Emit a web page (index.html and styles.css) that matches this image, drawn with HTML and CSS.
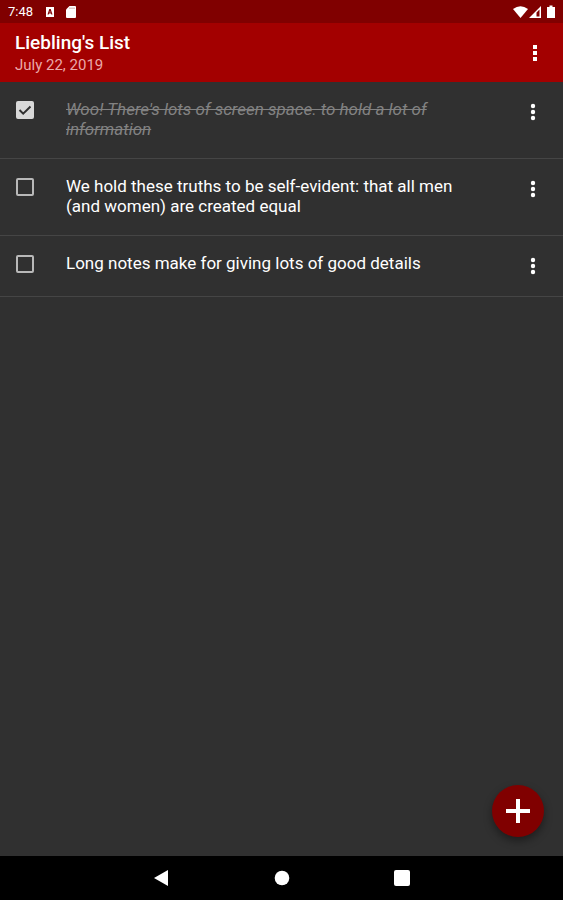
FILE: index.html
```html
<!DOCTYPE html>
<html lang="en">
<head>
<meta charset="utf-8">
<meta name="viewport" content="width=device-width, initial-scale=1">
<title>Liebling's List</title>
<link rel="stylesheet" href="styles.css">
</head>
<body>
<div class="status">
  <span class="clock">7:48</span>
  <svg class="note-icon" width="10" height="12" viewBox="0 0 10 12"><path fill="#fff" fill-rule="evenodd" d="M1 1h8v10H1zM4.300 3 2.500 8.500h1.200l.3-1h2l.3 1h1.200L5.700 3zM5 4.800l.5 1.700h-1z"/></svg>
  <svg class="card-icon" width="12" height="14" viewBox="0 0 12 14"><path fill="#fff" d="M4.500 1H10q1 0 1 1v10q0 1-1 1H2q-1 0-1-1V4.500z"/><path stroke="#a66" stroke-width=".7" d="M5 2.500v1.500M7 2.500v1.500M9 2.500v1.500"/></svg>
  <svg class="system-icons" width="44" height="16" viewBox="0 0 44 16"><path fill="#fff" d="M0 5Q7.500-.5 15 5L7.500 14z"/><path fill="#fff" fill-rule="evenodd" d="M16 14 28 2v12zM23.500 8.500v4h3v-7z"/><path fill="#fff" d="M34 3h2.500V1.500h3V3H42v11h-8z"/></svg>
</div>
<header class="bar">
  <div class="heading">
    <h1>Liebling's List</h1>
    <p>July 22, 2019</p>
  </div>
  <button class="more" aria-label="List options"><svg width="4" height="16" viewBox="0 0 4 16"><path fill="#fff" d="M0 0h4v4H0zM0 6h4v4H0zM0 12h4v4H0z"/></svg></button>
</header>
<main>
  <ul class="notes">
    <li class="note">
      <input type="checkbox" id="n1" checked>
      <label for="n1">Woo! There's lots of screen space. to hold a lot of information</label>
      <button class="more" aria-label="Note options"><svg width="6" height="18" viewBox="0 0 6 18"><g fill="#fff"><circle cx="3" cy="3" r="2.200"/><circle cx="3" cy="9" r="2.200"/><circle cx="3" cy="15" r="2.200"/></g></svg></button>
    </li>
    <li class="note">
      <input type="checkbox" id="n2">
      <label for="n2">We hold these truths to be self-evident: that all men (and women) are created equal</label>
      <button class="more" aria-label="Note options"><svg width="6" height="18" viewBox="0 0 6 18"><g fill="#fff"><circle cx="3" cy="3" r="2.200"/><circle cx="3" cy="9" r="2.200"/><circle cx="3" cy="15" r="2.200"/></g></svg></button>
    </li>
    <li class="note">
      <input type="checkbox" id="n3">
      <label for="n3">Long notes make for giving lots of good details</label>
      <button class="more" aria-label="Note options"><svg width="6" height="18" viewBox="0 0 6 18"><g fill="#fff"><circle cx="3" cy="3" r="2.200"/><circle cx="3" cy="9" r="2.200"/><circle cx="3" cy="15" r="2.200"/></g></svg></button>
    </li>
  </ul>
  <button class="add" aria-label="Add note"><svg width="24" height="24" viewBox="0 0 24 24"><path fill="none" stroke="#fff" stroke-width="4" d="M12 0v24M0 12h24"/></svg></button>
</main>
<nav class="system-nav">
  <button aria-label="Back"><svg width="16" height="18" viewBox="0 0 16 18"><path fill="#fff" d="M14 1v16L0 9z"/></svg></button>
  <button aria-label="Home"><svg width="16" height="16" viewBox="0 0 16 16"><circle fill="#fff" cx="8" cy="8" r="7.300"/></svg></button>
  <button aria-label="Recent apps"><svg width="16" height="16" viewBox="0 0 16 16"><rect fill="#fff" width="16" height="16" rx="2"/></svg></button>
</nav>
</body>
</html>
```
FILE: styles.css
```css
* {
  box-sizing: border-box;
}

body {
  margin: 0;
  min-height: 100vh;
  display: flex;
  flex-direction: column;
  background: #303030;
  color: #fff;
  font-family: Roboto, "Liberation Sans", sans-serif;
}

button {
  padding: 0;
  border: 0;
  background: none;
  color: inherit;
  display: flex;
  align-items: center;
  justify-content: center;
}

svg {
  display: block;
}

.status {
  height: 23px;
  padding: 0 6px 0 8px;
  display: flex;
  align-items: center;
  background: #800000;
}

.clock {
  font-size: 13px;
  line-height: 24px;
}

.note-icon {
  margin-left: 12px;
}

.card-icon {
  margin-left: 10px;
}

.system-icons {
  margin-left: auto;
}

.bar {
  height: 59px;
  padding: 0 8px 0 15px;
  display: flex;
  align-items: center;
  justify-content: space-between;
  background: #a30000;
}

.heading h1 {
  margin: 0;
  font-size: 19px;
  font-weight: 500;
  line-height: 24px;
}

.heading p {
  margin: 0;
  font-size: 15px;
  line-height: 20px;
  color: #eba9a9;
}

.more {
  flex: none;
  width: 40px;
  height: 60px;
}

main {
  position: relative;
  flex: 1;
}

.notes {
  margin: 0;
  padding: 0;
  list-style: none;
}

.note {
  padding: 0 10px 0 16px;
  display: flex;
  align-items: flex-start;
  border-bottom: 1px solid #454545;
}

.note input {
  appearance: none;
  flex: none;
  width: 18px;
  height: 18px;
  margin: 19px 32px 0 0;
  border: 2px solid #b8b8b8;
  border-radius: 2px;
}

.note input:checked {
  border-color: #d8d8d8;
  background: #d8d8d8 url("data:image/svg+xml,%3Csvg xmlns='http://www.w3.org/2000/svg' viewBox='0 0 14 14'%3E%3Cpath d='M1.500 7 5.200 10.700 12.500 3.500' fill='none' stroke='%23303030' stroke-width='2'/%3E%3C/svg%3E") center / 14px 14px no-repeat;
}

.note label {
  flex: 1;
  padding: 17px 40px 19px 0;
  font-size: 17px;
  line-height: 20px;
}

.note input:checked + label {
  color: #828282;
  font-style: italic;
  text-decoration: line-through;
}

.add {
  position: absolute;
  right: 19px;
  bottom: 19px;
  width: 52px;
  height: 52px;
  border-radius: 50%;
  background: #800000;
  box-shadow: 0 4px 8px rgba(0, 0, 0, 0.4);
}

.system-nav {
  height: 44px;
  display: flex;
  align-items: center;
  justify-content: center;
  background: #000;
}

.system-nav button {
  width: 120px;
  height: 44px;
}
```
